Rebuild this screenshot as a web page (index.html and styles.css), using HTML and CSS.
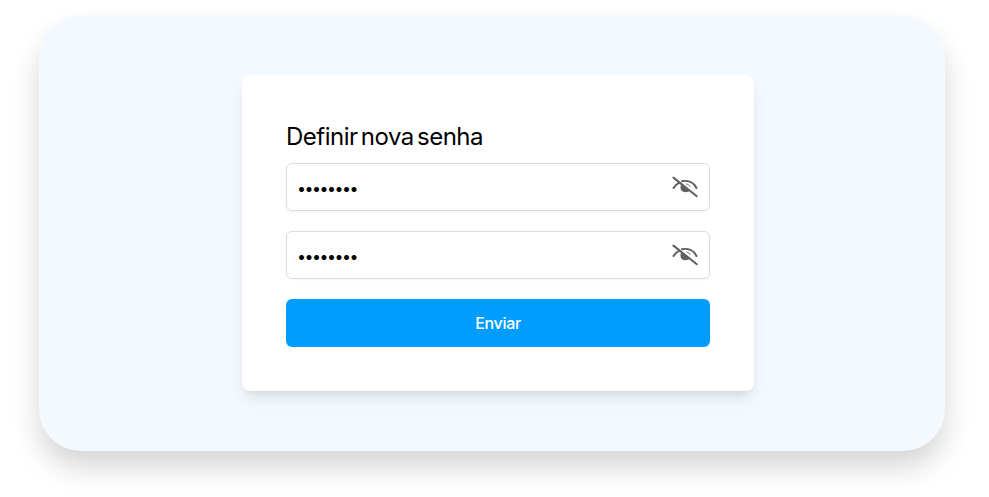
FILE: index.html
```html
<!DOCTYPE html>
<html lang="pt-br">
<head>
  <meta charset="UTF-8">
  <meta name="viewport" content="width=device-width, initial-scale=1.0">
  <title>Definir nova senha</title>
  <link rel="stylesheet" href="styles.css">
</head>
<body>

  <main class="painel">
    <form class="card">
      <h1>Definir nova senha</h1>

      <div class="campo">
        <input type="password" name="senha" value="12345678" aria-label="Nova senha">
        <svg class="olho" viewBox="0 0 28 24" aria-hidden="true">
          <path class="arco" d="M2.5 13C4.2 10.4 6.2 8.6 8.4 7.6M11 6.2C17.5 5 23 7.8 25.5 13"/>
          <path class="iris" d="M10.2 9.6C8.2 13.8 10.4 17.3 14.3 17.3C16.4 17.3 18 16.6 19 15.6Z"/>
          <path class="brilho" d="M15 8.8Q18.6 9.2 19.2 12"/>
          <path class="traco" d="M2.4 2.6L25.8 21.2"/>
        </svg>
      </div>

      <div class="campo">
        <input type="password" name="confirmar" value="12345678" aria-label="Confirmar senha">
        <svg class="olho" viewBox="0 0 28 24" aria-hidden="true">
          <path class="arco" d="M2.5 13C4.2 10.4 6.2 8.6 8.4 7.6M11 6.2C17.5 5 23 7.8 25.5 13"/>
          <path class="iris" d="M10.2 9.6C8.2 13.8 10.4 17.3 14.3 17.3C16.4 17.3 18 16.6 19 15.6Z"/>
          <path class="brilho" d="M15 8.8Q18.6 9.2 19.2 12"/>
          <path class="traco" d="M2.4 2.6L25.8 21.2"/>
        </svg>
      </div>

      <button type="submit">Enviar</button>
    </form>
  </main>

</body>
</html>
```

FILE: styles.css
```css
* {
  margin: 0;
  padding: 0;
  box-sizing: border-box;
}

body {
  font-family: Inter, "Liberation Sans", sans-serif;
  background-color: #fff;
  height: 497px;
  padding: 16px 44px 46px 39px;
  overflow: hidden;
}

.painel {
  height: 435px;
  padding: 59px 0 0 203px;
  border-radius: 42px;
  background-color: #f3f9ff;
  box-shadow: 0 17px 28px rgba(0, 0, 0, 0.16);
}

.card {
  width: 512px;
  height: 316px;
  padding: 44px;
  border-radius: 8px;
  background-color: #fff;
  box-shadow: 0 10px 15px -3px rgba(0, 0, 0, 0.1), 0 4px 6px -4px rgba(0, 0, 0, 0.1);
}

h1 {
  height: 44px;
  font-size: 24px;
  font-weight: 400;
  line-height: 36px;
  letter-spacing: -0.5px;
  word-spacing: -3px;
  color: #000;
  white-space: nowrap;
}

.campo {
  display: flex;
  align-items: center;
  height: 48px;
  margin-bottom: 20px;
  padding: 0 10px 0 10px;
  border: 1px solid #d9dde3;
  border-radius: 6px;
  box-shadow: 0 1px 2px rgba(0, 0, 0, 0.05);
}

input {
  flex: 1;
  min-width: 0;
  height: 24px;
  padding-top: 1px;
  border: none;
  outline: none;
  background: none;
  color: #000;
  font-family: inherit;
  font-size: 16px;
  letter-spacing: -1.5px;
}

/* Ícone de senha oculta */
.olho {
  width: 28px;
  height: 24px;
}

.arco,
.traco {
  fill: none;
  stroke: #606060;
  stroke-width: 2;
  stroke-linecap: round;
}

.iris {
  fill: #606060;
}

.brilho {
  fill: none;
  stroke: #888;
  stroke-width: 1;
}

button {
  display: block;
  width: 100%;
  height: 48px;
  border: none;
  border-radius: 6px;
  background-color: #009dff;
  color: #fff;
  font-family: inherit;
  font-size: 16px;
  font-weight: 500;
  letter-spacing: -0.3px;
  cursor: pointer;
}
```
